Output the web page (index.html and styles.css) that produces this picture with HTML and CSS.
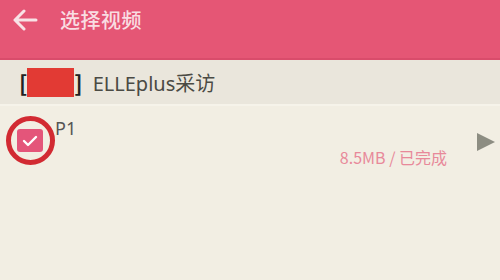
FILE: index.html
```html
<!DOCTYPE html>
<html>
<head>
<meta charset="utf-8">
<link rel="stylesheet" href="styles.css">
</head>
<body>
<div class="app">
  <header class="topbar">
    <svg class="back" width="26" height="22" viewBox="0 0 26 22">
      <path d="M24 11H3M12 2L3 11l9 9" fill="none" stroke="#f8e2e6" stroke-width="3" stroke-linecap="round" stroke-linejoin="round"/>
    </svg>
    <span class="title">选择视频</span>
  </header>
  <div class="section">
    <span class="bracket">[</span><span class="redact"></span><span class="bracket">]</span>
    <span class="sname">ELLEplus采访</span>
  </div>
  <div class="item">
    <div class="check">
      <span class="ring"></span>
      <span class="box">
        <svg width="16" height="12" viewBox="0 0 16 12"><path d="M2 6l4 4 8-8" fill="none" stroke="#fff" stroke-width="2.4" stroke-linecap="round" stroke-linejoin="round"/></svg>
      </span>
    </div>
    <div class="info">
      <div class="pname">P1</div>
      <div class="status">8.5MB / 已完成</div>
    </div>
    <span class="play"></span>
  </div>
</div>
</body>
</html>
```
FILE: styles.css
```css
html, body { margin: 0; padding: 0; }
body { width: 500px; height: 280px; background: #f2eee3; font-family: "Noto Sans CJK SC", "Noto Sans", sans-serif; overflow: hidden; }
.app { display: flex; flex-direction: column; }
.topbar { height: 58px; background: #e55675; border-bottom: 2px solid #d94c6b; display: flex; align-items: flex-start; padding-left: 12px; }
.back { margin-top: 9px; }
.title { color: #f9dde2; font-size: 20px; font-weight: 500; line-height: 22px; margin-left: 22px; margin-top: 9px; letter-spacing: 0.5px; }
.section { height: 44px; background: #eae6dc; border-bottom: 2px solid #f6f3ea; display: flex; align-items: center; padding-left: 19px; }
.bracket { font-size: 22px; font-weight: bold; color: #222; line-height: 1; }
.redact { width: 47px; height: 29px; background: #e23a34; margin: 0; }
.sname { font-size: 20px; color: #4a4a44; margin-left: 10px; font-family: "Noto Sans", "Noto Sans CJK SC", sans-serif; }
.item { display: flex; align-items: flex-start; padding: 10px 0 0 6px; position: relative; }
.check { width: 49px; height: 49px; position: relative; flex: none; margin-top: 0; }
.ring { position: absolute; inset: 0; border: 5px solid #d22a32; border-radius: 50%; box-sizing: border-box; }
.box { position: absolute; left: 11px; top: 13px; width: 26px; height: 23px; background: #e4557a; border-radius: 3px; display: flex; align-items: center; justify-content: center; }
.info { flex: 1; display: flex; flex-direction: column; }
.pname { font-size: 18px; color: #555; line-height: 20px; margin-top: 2px; font-family: "Noto Sans", sans-serif; }
.status { align-self: flex-end; margin-top: 10px; margin-right: 6px; font-size: 16px; color: #e8899a; line-height: 18px; }
.play { width: 0; height: 0; border-top: 9px solid transparent; border-bottom: 9px solid transparent; border-left: 18px solid #8d8d82; margin: 17px 5px 0 24px; }
```
